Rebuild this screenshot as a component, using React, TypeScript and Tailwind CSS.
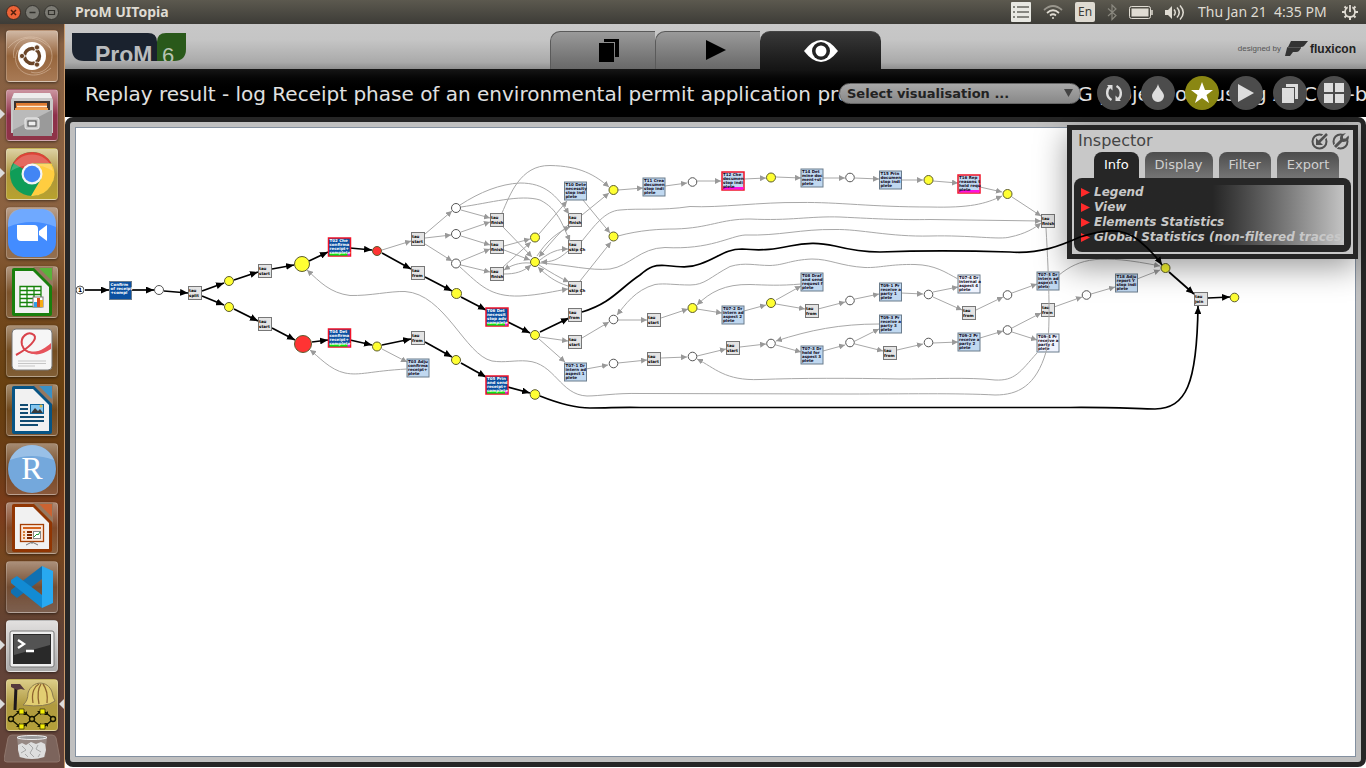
import React from "react";

type Straight = [number, number, number, number];

const strongEdges: Straight[] = [
  [85, 290, 109, 290], [132, 290, 154, 290], [164, 291, 188, 293], [202, 291, 224, 283],
  [202, 296, 224, 305], [234, 280, 258, 272], [234, 309, 258, 321], [272, 269, 294, 265],
  [272, 328, 295, 340], [309, 261, 328, 252], [312, 342, 328, 340], [350, 248, 372, 250],
  [350, 340, 372, 345], [382, 253, 411, 269], [382, 345, 411, 339], [425, 277, 452, 291],
  [425, 342, 452, 357], [461, 297, 486, 310], [461, 363, 486, 377], [508, 322, 530, 333],
  [508, 387, 530, 393], [540, 332, 569, 318], [1169, 272, 1194, 294], [1208, 298, 1230, 297],
];

const greyEdges: Straight[] = [
  [382, 250, 411, 241], [425, 234, 452, 211], [425, 238, 451, 235], [425, 244, 452, 261],
  [461, 210, 490, 218], [461, 232, 490, 222], [461, 236, 490, 245], [461, 261, 490, 249],
  [461, 265, 490, 272], [504, 246, 530, 239], [504, 250, 530, 260], [503, 227, 532, 257],
  [503, 267, 531, 242], [539, 234, 567, 201], [583, 200, 610, 233], [582, 215, 609, 193],
  [580, 281, 611, 242], [618, 190, 643, 188], [665, 186, 687, 183], [697, 181, 721, 181],
  [744, 179, 766, 178], [776, 177, 801, 178], [823, 178, 845, 178], [855, 178, 879, 179],
  [901, 180, 923, 180], [933, 181, 958, 183], [980, 187, 1002, 192], [1012, 197, 1041, 216],
  [540, 337, 568, 341], [539, 339, 565, 362], [582, 338, 609, 322], [618, 320, 647, 320],
  [661, 318, 688, 309], [697, 309, 722, 313], [744, 311, 766, 305], [776, 304, 805, 309],
  [776, 300, 801, 286], [818, 309, 845, 302], [855, 299, 879, 294], [901, 293, 923, 294],
  [933, 297, 962, 310], [933, 292, 958, 287], [976, 310, 1003, 297], [1012, 293, 1037, 284],
  [586, 369, 608, 365], [618, 363, 647, 360], [661, 358, 687, 357], [697, 356, 726, 349],
  [740, 347, 766, 344], [776, 345, 801, 352], [823, 351, 845, 345], [855, 341, 879, 329],
  [855, 344, 883, 351], [897, 350, 923, 344], [933, 343, 958, 342], [980, 338, 1003, 331],
  [1012, 328, 1041, 313], [1012, 332, 1037, 340], [1054, 307, 1082, 297], [1091, 294, 1115, 287],
  [1137, 279, 1160, 270], [382, 349, 407, 362],
];

const greyCurves: string[] = [
  "M460 205C480 192 500 184 520 183C545 183 556 195 569 214",
  "M461 207C490 203 520 194 540 200C558 209 562 224 570 241",
  "M502 213C510 195 520 165 550 165.5C580 166 595 175 609 187",
  "M460 267C480 285 490 297 520 296C540 295 555 291 568 289",
  "M1046 228C1049 280 1051 335 1046 352C1036 386 1018 395 995 395C960 393 900 394 850 394L640 393.5C615 393 600 396 587 396C560 395 555 363 527 361C515 360 505 363 492 361C465 355 445 294 405 291.5C390 291 370 296 350 295.5C330 293 320 282 307 270",
  "M407 369C370 371 360 376 345 373C330 370 318 356 310 350",
  "M1037 353C1020 372 1015 381 995 380C970 377 930 379 900 379C850 378 800 378 760 379.5C725 381 715 368 697 359",
  "M958 279C945 272 935 265 915 264.5C890 264 880 268 865 267.5C840 266 830 259 812 259C790 260 785 265 770 265.5C755 265.5 745 262 730 266.5C710 277 705 285 690 285C675 285 665 283 655 284.5C635 290 625 305 617 315",
  "M801 284C780 286 765 285 750 284.5C725 284 710 292 697 305",
  "M879 324C840 324 810 330 776 341",
  "M582 241C595 225 605 211 620 210C640 208 660 211 690 206.5C720 208 760 202 800 202.5C840 202 870 207 930 207C970 208 985 204 1002 196",
  "M618 236C640 230 660 229 675 229C710 228 720 219 750 219C790 221 810 216 840 217C880 219 900 220 930 219.5L1041 221",
  "M540 263C570 265 590 271 610 269C630 266 640 248 665 247.5C710 250 730 236 745 235C780 236 800 229 835 229.5C860 229 890 237 930 236C970 235 1000 240 1010 237C1025 234 1035 228 1041 223",
  "M1059 275C1080 258 1100 254 1160 266",
  "M504 274C515 274 523 272 531 265",
  "M530 263C519 262 510 266 504 270",
  "M568 225C556 236 548 246 539 257",
  "M537 256C546 242 557 232 570 227",
  "M540 260C550 252 558 249 568 249",
  "M568 251C558 260 552 262 541 262",
  "M539 265C550 272 560 278 569 282",
  "M568 286C555 282 546 275 538 267",
];

const returnFlow =
  "M540 396C560 404 575 408 590 408C610 408 620 407 640 407.5L1070 407.5C1110 407 1140 409 1155 409C1186 408 1197 385 1198 306";
const bypassFlow =
  "M582 312C612 303 620 288 640 275C650 266 655 265 665 265.5C680 267 690 268 700 264C718 258 725 249 742 249C765 251 775 249 790 246C808 242 820 243 835 246C855 251 865 252 880 252C930 250 980 251 1010 252C1040 254 1060 246 1080 237C1105 229 1122 228 1137 239C1147 247 1156 256 1162 265";

type Place = [number, number, number, string];
const Y = "#ffff33";
const R = "#ff3333";
const W = "#ffffff";
const places: Place[] = [
  [80, 290, 4, W], [159, 290, 4.5, W], [229, 281, 4.5, Y], [229, 307, 4.5, Y], [302, 264, 7.5, Y],
  [303, 344, 8.5, R], [377, 251, 4.5, R], [377, 346.5, 4.5, Y], [456, 208, 4.5, W], [456, 234, 4.5, W],
  [456, 263.5, 4.5, W], [456.5, 293.5, 5, Y], [456, 360, 4.5, Y], [535, 335, 4.5, Y], [535, 394.5, 4.8, Y],
  [535, 237.5, 4.5, Y], [535, 262, 4.5, Y], [613.5, 190, 4.5, Y], [613.5, 236.5, 4.5, Y], [613.5, 319.5, 4.3, W],
  [613.5, 363.5, 4.3, W], [692.5, 182, 4.3, W], [692.5, 308, 4.5, Y], [692.5, 356.5, 4.3, W], [771, 177.5, 4.5, Y],
  [771, 303, 4.5, Y], [771, 343.5, 4.3, W], [850, 177.5, 4.3, W], [850, 300.5, 4.3, W], [850, 342.5, 4.3, W],
  [928.5, 180, 4.5, Y], [928.5, 294.5, 4.3, W], [928.5, 342.5, 4.3, W], [1007.5, 194, 4.5, Y], [1007.5, 295, 4.3, W],
  [1007.5, 330, 4.3, W], [1086.5, 295, 4.3, W], [1165.5, 268, 4.5, Y], [1234.5, 297.5, 4.3, Y],
];

type Silent = [number, number, string];
const silents: Silent[] = [
  [195, 293, "split"], [265, 271, "start"], [265, 324, "start"], [418, 239, "start"], [418, 273, "from"],
  [418, 338, "from"], [497, 220, "finish"], [497, 247, "finish"], [497, 274, "finish"], [575, 220, "finish"],
  [575, 247, "skip Ch"], [575, 288, "skip Ch"], [575, 315, "from"], [575, 342, "start"], [654, 320, "start"],
  [654, 359, "start"], [733, 348, "start"], [812, 311, "from"], [890, 353, "from"], [969, 313, "from"],
  [1048, 310, "from"], [1048, 221, "finish"], [1201, 299, "join"],
];

type Activity = [number, number, "deep" | "light" | "pale", boolean, string[]];
const activities: Activity[] = [
  [120.5, 290.5, "deep", false, ["Confirm", "of receipt", "+compl"]],
  [339.5, 247, "deep", true, ["T02 Che", "confirma", "receipt+", "complete"]],
  [339.5, 338, "deep", true, ["T04 Det", "confirma", "receipt+", "complete"]],
  [497, 317, "deep", true, ["T06 Det", "necessit", "stop adv", "complete"]],
  [497, 385, "deep", true, ["T05 Prin", "and send", "receipt+", "complete"]],
  [418, 368, "light", false, ["T03 Adju", "confirma", "receipt+", "plete"]],
  [575.5, 191, "light", false, ["T10 Dete", "necessity", "stop indi", "plete"]],
  [654, 187, "light", false, ["T11 Crea", "documen", "stop indi", "plete"]],
  [575.5, 372, "light", false, ["T07-1 Dr", "intern ad", "aspect 1", "plete"]],
  [733, 181, "light", true, ["T12 Che", "documen", "stop indi", "plete"]],
  [812, 178, "light", false, ["T14 Det", "mine doc", "ment+st", "plete"]],
  [890.5, 180, "light", false, ["T15 Prin", "documen", "stop indi", "plete"]],
  [969, 184, "light", true, ["T16 Rep", "reasons t", "hold requ", "plete"]],
  [733, 315, "light", false, ["T07-2 Dr", "intern ad", "aspect 2", "plete"]],
  [812, 282, "light", false, ["T08 Draf", "and send", "request f", "plete"]],
  [890.5, 292, "light", false, ["T09-1 Pr", "receive a", "party 1", "plete"]],
  [812, 355, "light", false, ["T07-3 Dr", "hold for", "aspect 3", "plete"]],
  [890.5, 324, "light", false, ["T09-3 Pr", "receive a", "party 3", "plete"]],
  [969, 284, "pale", false, ["T07-4 Dr", "internal a", "aspect 4", "plete"]],
  [969, 342, "light", false, ["T09-2 Pr", "receive a", "party 2", "plete"]],
  [1048, 281, "light", false, ["T07-5 Dr", "intern ad", "aspect 5", "plete"]],
  [1048, 343, "pale", false, ["T09-4 Pr", "receive a", "party 4", "plete"]],
  [1126.5, 283, "light", false, ["T18 Adju", "report Y", "stop indi", "plete"]],
];

const fills = { deep: "#0a50a1", light: "#c0d8f0", pale: "#eef2fd" };

function ProcessGraph() {
  return (
    <svg className="block h-full w-full" role="img" aria-label="Petri net replay result">
      <defs>
        <marker id="ah-black" viewBox="0 0 7 6" refX="7" refY="3" markerWidth="8" markerHeight="7" markerUnits="userSpaceOnUse" orient="auto">
          <path d="M0 0L7 3L0 6z" fill="#000" />
        </marker>
        <marker id="ah-grey" viewBox="0 0 6 6" refX="6" refY="3" markerWidth="6" markerHeight="6" markerUnits="userSpaceOnUse" orient="auto">
          <path d="M0 0L6 3L0 6z" fill="#999" />
        </marker>
      </defs>
      <g transform="translate(-76 -128)" fontFamily="'DejaVu Sans', sans-serif" fontWeight="bold">
        <g fill="none" stroke="#a8a8a8" strokeWidth="1">
          {greyEdges.map(([a, b, c, d], i) => (
            <path key={i} d={`M${a} ${b}L${c} ${d}`} markerEnd="url(#ah-grey)" />
          ))}
        </g>
        <g fill="none" stroke="#000" strokeWidth="1.7">
          {strongEdges.map(([a, b, c, d], i) => (
            <path key={i} d={`M${a} ${b}L${c} ${d}`} markerEnd="url(#ah-black)" />
          ))}
          <path d={returnFlow} markerEnd="url(#ah-black)" />
        </g>
        {silents.map(([x, y, label], i) => (
          <g key={i}>
            <rect x={x - 6.5} y={y - 6.5} width="13" height="13" fill="#e4e4e4" stroke="#777" />
            <text x={x - 6} y={y - 1} fontSize="4" fill="#000">tau</text>
            <text x={x - 6} y={y + 4} fontSize="4" fill="#000">{label}</text>
          </g>
        ))}
        {activities.map(([x, y, tone, deviating, lines], i) => (
          <g key={i}>
            <rect x={x - 11} y={y - 9} width="22" height="18" fill={fills[tone]} stroke={deviating ? "#f0142a" : "#6b7c8c"} strokeWidth={deviating ? 1.5 : 1} />
            {deviating && (
              <>
                <rect x={x - 10} y={y + 6} width="20" height="2.5" fill={tone === "deep" ? "#12e612" : "#ff10e0"} />
                <rect x={x + 8} y={y + 6} width="2.5" height="2.5" fill="#ff10e0" />
              </>
            )}
            {lines.map((line, n) => (
              <text key={n} x={x - 10} y={y - 5 + n * 4} fontSize="4" fill={tone === "deep" ? "#fff" : "#100820"}>
                {line}
              </text>
            ))}
          </g>
        ))}
        <g fill="none" stroke="#a8a8a8" strokeWidth="1">
          {greyCurves.map((d, i) => (
            <path key={i} d={d} markerEnd="url(#ah-grey)" />
          ))}
        </g>
        {places.map(([x, y, r, fill], i) => (
          <circle key={i} cx={x} cy={y} r={r} fill={fill} stroke={fill === W ? "#555" : "#5c5c30"} strokeWidth="1" />
        ))}
        <text x="78" y="292" fontSize="6" fill="#000">1</text>
      </g>
    </svg>
  );
}

function AppTile({ label, tone, running, active, children }: { label: string; tone: string; running?: boolean; active?: boolean; children: React.ReactNode }) {
  return (
    <div className="relative flex w-full justify-center">
      {running && <span className="absolute top-5 left-0 border-y-[5px] border-l-[5px] border-y-transparent border-l-[#dcdcdc]" />}
      <button aria-label={label} className={`h-13 w-13 overflow-hidden rounded border border-white/20 shadow-[0_1px_3px_rgba(0,0,0,0.5)] ${tone}`}>
        <svg viewBox="1 1 50 50" className="block h-full w-full">{children}</svg>
      </button>
      {active && <span className="absolute top-5 right-0 border-y-[5px] border-r-[5px] border-y-transparent border-r-[#dcdcdc]" />}
    </div>
  );
}

function DocumentShape({ dark, light, children }: { dark: string; light: string; children: React.ReactNode }) {
  return (
    <>
      <path d="M8 2h24l14 14v32a2 2 0 0 1-2 2H8a2 2 0 0 1-2-2V4a2 2 0 0 1 2-2z" fill={dark} />
      <path d="M9 5h18l16 16v26H9z" fill="#f1f1f1" />
      <path d="M27 1h20v20z" fill="#96785f" />
      <path d="M33 2h13v13z" fill={light} />
      {children}
    </>
  );
}

const clearTile = "bg-linear-to-b from-white/40 via-white/5 to-white/15";

function Launcher() {
  return (
    <nav aria-label="Launcher" className="flex w-[65px] shrink-0 flex-col gap-[7px] overflow-hidden border-r border-[#c99a6c] bg-[linear-gradient(#5d4532_0px,#866043_20px,#8c6240_200px,#754a20_270px,#68400f_370px,#6b3d16_440px,#7d3c1c_490px,#75461f_530px,#604236_610px,#64443a_700px)] pt-1.5">
      <AppTile label="Dash home" tone="bg-linear-to-b from-[#d0b8a4] via-[#96653c] to-[#a87a55]">
        <g fill="none" stroke="#e5ccb5" strokeWidth="1" opacity=".5">
          <path d="M2 18C15 2 40 4 45 20S35 46 25 42M8 28C4 12 24-2 44 18M12 20C2 38 25 55 45 38" />
        </g>
        <circle cx="26" cy="26" r="14" fill="#fff" />
        <circle cx="26" cy="26" r="7.5" fill="none" stroke="#6a4528" strokeWidth="3.4" />
        <g stroke="#fff" strokeWidth="1.2"><path d="M26 26h-12M26 26l6-11M26 26l6 11" /></g>
        <circle cx="26" cy="26" r="5.3" fill="#fff" />
        <g fill="#6a4528" stroke="#fff" strokeWidth=".8"><circle cx="16" cy="26" r="2.6" /><circle cx="31" cy="17.4" r="2.6" /><circle cx="31" cy="34.6" r="2.6" /></g>
      </AppTile>
      <AppTile label="Files" running tone="bg-linear-to-b from-[#cb95a1] via-[#8e304a] to-[#8e3447]">
        <path d="M8 4h36l3 7v33H5V11z" fill="#c8c8c8" />
        <path d="M8 4h36l2 5H6z" fill="#ededed" />
        <path d="M8 12h36v12H8z" fill="#3b322e" />
        <path d="M10 14h31v10H10z" fill="#e07b30" />
        <path d="M11 17.500h30" stroke="#fff0d8" strokeWidth="1.6" />
        <path d="M9 19h33v3H9z" fill="#f3a14e" />
        <path d="M7 21h39v26H7z" fill="#9a9a9a" />
        <path d="M7 21h39L7 41z" fill="#bababa" />
        <rect x="19" y="29" width="14" height="11" rx="2" fill="#c9c9c9" stroke="#eee" />
        <rect x="22" y="32" width="8" height="5" fill="#eee" stroke="#444" />
      </AppTile>
      <AppTile label="Google Chrome" running tone="bg-linear-to-b from-[#ddd2a4] via-[#ae943a] to-[#b8a22e]">
        <circle cx="26" cy="26" r="22" fill="#0f9d58" />
        <path d="M26 26L7 15A22 22 0 0 1 45.5 15.5H26z" fill="#dc4437" />
        <path d="M26 15.5h19.6A22 22 0 0 1 25 48l10-17z" fill="#ffcd40" />
        <circle cx="26" cy="26" r="10.5" fill="#f4f4f4" />
        <circle cx="26" cy="26" r="8.3" fill="#4285f4" />
        <path d="M5 23C10 1 42 1 47 23C35 15 17 15 5 23z" fill="#fff" opacity=".2" />
      </AppTile>
      <AppTile label="Zoom" tone={clearTile}>
        <rect x="2" y="2" width="48" height="48" rx="15" fill="#438cff" />
        <path d="M2 20V17Q2 2 17 2h18q15 0 15 15v3Q26 10 2 20z" fill="#8dbcff" opacity=".6" />
        <path d="M11 18h17a4 4 0 0 1 4 4v12H15a4 4 0 0 1-4-4zM33 24l8-6v16l-8-6z" fill="#fff" />
      </AppTile>
      <AppTile label="LibreOffice Calc" tone={clearTile}>
        <DocumentShape dark="#197f0d" light="#59b23a">
          <path d="M14 20.500h21v20H14zM14 24.500h21M14 28.500h21M14 32.500h21M14 36.500h21M21 20v20M28 20v20" fill="#fff" stroke="#16820a" strokeWidth="1.3" />
          <rect x="27" y="31" width="10" height="10" fill="#fff" stroke="#777" />
          <path d="M28 36h3v5h-3z" fill="#309fe7" /><path d="M31 32h3v9h-3z" fill="#d94c18" /><path d="M34 34h3v7h-3z" fill="#f3ac15" />
        </DocumentShape>
      </AppTile>
      <AppTile label="Document viewer" tone={clearTile}>
        <rect x="6" y="4" width="40" height="41" rx="4" fill="#f6f6f6" stroke="#777" />
        <path d="M10 30C23 23 32 14 28 10C22 5 14 12 16 20C19 29 30 31 44 22" fill="none" stroke="#d9434b" strokeWidth="2" />
        <path d="M20 25C30 30 38 24 45 18v6C35 31 26 31 20 25z" fill="#e6535b" />
        <path d="M12 36h28M12 38.500h28M12 41h17" stroke="#c6c6c6" strokeWidth="1" />
      </AppTile>
      <AppTile label="LibreOffice Writer" tone={clearTile}>
        <DocumentShape dark="#075484" light="#3a91c5">
          <path d="M14 21h8M14 25h8M14 29h8M14 33h24M14 37h24M14 41h18" stroke="#124c72" strokeWidth="2" />
          <rect x="24.500" y="20.500" width="13" height="9" fill="#84c6ef" stroke="#11659b" />
          <path d="M25 29l4-5 3 3 2-2 3 4z" fill="#393939" /><circle cx="35" cy="22" r="1.500" fill="#ddbc4e" />
        </DocumentShape>
      </AppTile>
      <AppTile label="R" tone={clearTile}>
        <circle cx="26" cy="26" r="24" fill="#74a8dc" />
        <path d="M4 17C12-3 40-3 48 17Q26 9 4 17z" fill="#c8def5" opacity=".45" />
        <text x="26" y="36" textAnchor="middle" fontFamily="'Liberation Serif', serif" fontSize="32" fill="#fff">R</text>
      </AppTile>
      <AppTile label="LibreOffice Impress" tone={clearTile}>
        <DocumentShape dark="#913603" light="#cb6332">
          <rect x="14.500" y="22.500" width="23" height="17" fill="#f9e7da" stroke="#a53e03" strokeWidth="1.300" />
          <path d="M17 26h18" stroke="#d4621d" strokeWidth="2" />
          <path d="M17 30h2M17 33h2M17 36h2" stroke="#d4803a" strokeWidth="2" /><path d="M21 30h5M21 33h5M21 36h5" stroke="#7c2800" strokeWidth="2" />
          <rect x="27.500" y="29.500" width="7" height="7" fill="#fff" stroke="#888" /><path d="M28 35l3-3 1 1 2-3" stroke="#1c9938" fill="none" />
          <path d="M26 40l-6 3M26 40l6 3M26 40v2" stroke="#777" />
        </DocumentShape>
      </AppTile>
      <AppTile label="Visual Studio Code" tone={clearTile}>
        <path d="M36 5v13L11 37l-6-5v-3z" fill="#1071b2" />
        <path d="M36 47V34L11 15l-6 4v3z" fill="#128bd4" />
        <path d="M36 5l11 5v32l-11 5z" fill="#28a9f1" />
      </AppTile>
      <AppTile label="Terminal" running tone="bg-linear-to-b from-[#e2e0df] to-[#aaa]">
        <rect x="4" y="11" width="44" height="36" rx="2" fill="#eee" stroke="#777" />
        <path d="M7 14h38v30H7z" fill="#292929" /><path d="M8 15h36v10L8 35z" fill="#535353" />
        <path d="M12 20l6 4-6 4M20 31h8" stroke="#fff" strokeWidth="2.300" fill="none" />
      </AppTile>
      <AppTile label="ProM" running active tone="bg-linear-to-b from-[#dccd88] via-[#b09a40] to-[#b4a039]">
        <path d="M10 7L9 31" stroke="#1d171c" strokeWidth="3" /><path d="M5 5h9l5 6-4-1-4 1-6-3z" fill="#55393d" />
        <path d="M17 26Q22 22 22 14C26 1 42 1 46 13Q47 19 49 22Q40 29 17 26z" fill="#e2ce72" stroke="#8a7a50" /><path d="M27 24C25 13 29 7 33 5M33 25C31 15 33 8 35 5M41 24C42 15 40 9 37 5" stroke="#8e642f" strokeWidth="1.300" fill="none" />
        <g stroke="#151500" fill="none" strokeWidth="1.400"><circle cx="5" cy="40" r="2.500" /><circle cx="26" cy="40" r="2.500" /><circle cx="47" cy="40" r="2.500" /><path d="M7 38l6-5M13 47l-6-5M24 38l-6-5M24 42l-6 5M28 38l6-5M28 42l6 5M45 38l-6-5M45 42l-6 5" /></g>
        <path d="M10 32h4v4zM10 48h4v-4zM21 32v4h-4zM21 48v-4h-4zM31 32h4v4zM31 48h4v-4zM42 32v4h-4zM42 48v-4h-4z" fill="#151500" />
        <path d="M13 30h5v5h-5zM13 45h5v5h-5zM34 30h5v5h-5zM34 45h5v5h-5z" fill="#f3ed05" stroke="#292700" strokeWidth=".7" />
      </AppTile>
      <button aria-label="Trash" className="-mt-1 flex justify-center">
        <svg width="56" height="29" viewBox="0 0 56 29">
          <path d="M8 1h40q3 0 4 3l4 21q0 3-3 3H3q-3 0-3-3L4 4Q5 1 8 1z" fill="#aaa09d" opacity=".35" stroke="#ded2c8" />
          <path d="M13 3h30l-2 20q-13 4-26 0z" fill="#b2aeac" opacity=".5" />
          <path d="M14 11l4-2 4 2 5-3 5 2 5-2 4 2 1 6-2 7q-12 4-24 0l-2-7z" fill="#dedede" />
          <path d="M18 12l4 4-5 3M25 10l4 4-3 5 4 4M34 11l-2 4 5 3M21 20l3 3M36 20l-2 3" stroke="#a8a8a8" fill="none" />
          <ellipse cx="28" cy="3.500" rx="15" ry="2" fill="#999" stroke="#eee" />
        </svg>
      </button>
    </nav>
  );
}

function SystemBar() {
  return (
    <header className="flex h-6 shrink-0 items-center justify-between bg-linear-to-b from-[#5c594f] to-[#3d3c37] pr-[7px] pl-1.5 font-['Noto_Sans',sans-serif] text-[#dfdbd2]">
      <div className="flex items-center gap-1">
        <button aria-label="Close" className="h-[15px] w-[15px] rounded-full border border-[#3a2a22] bg-[#ec6337]"><svg viewBox="0 0 13 13"><path d="M4 4l5 5M9 4L4 9" stroke="#50200e" strokeWidth="1.500" /></svg></button>
        <button aria-label="Minimize" className="h-[15px] w-[15px] rounded-full border border-[#35342f] bg-[#7c7b74]"><svg viewBox="0 0 13 13"><path d="M3.500 6.500h6" stroke="#32312c" strokeWidth="1.500" /></svg></button>
        <button aria-label="Maximize" className="h-[15px] w-[15px] rounded-full border border-[#35342f] bg-[#7c7b74]"><svg viewBox="0 0 13 13"><path d="M3.500 4.500h6v4h-6z" fill="none" stroke="#32312c" strokeWidth="1.200" /></svg></button>
        <h1 className="ml-3 text-sm font-bold">ProM UITopia</h1>
      </div>
      <div className="flex items-center gap-3 text-sm">
        <svg aria-label="List" width="20" height="20" viewBox="0 0 20 20"><rect width="20" height="20" rx="1" fill="#e8e8e2" /><path d="M2 5h2M6 5h12M2 10h2M6 10h12M2 15h2M6 15h12" stroke="#66665f" strokeWidth="1.500" /></svg>
        <svg aria-label="Wi-Fi" width="20" height="16" viewBox="0 0 20 16" fill="none" stroke="#dfdbd2" strokeWidth="1.700"><path d="M1 6Q10-2 19 6" opacity=".5" /><path d="M4 9q6-5.500 12 0M7 11.500q3-2.500 6 0" /><circle cx="10" cy="14" r="1" fill="#dfdbd2" stroke="none" /></svg>
        <span className="flex h-5 w-5 items-center justify-center rounded-xs bg-[#dfdbd2] text-xs text-[#3d3c37]">En</span>
        <svg aria-label="Bluetooth" width="10" height="17" viewBox="0 0 10 17"><path d="M1 4.500l8 7-4 4V1l4 4-8 7" fill="none" stroke="#8a887f" strokeWidth="1.200" /></svg>
        <svg aria-label="Battery" width="24" height="13" viewBox="0 0 24 13"><rect x=".5" y=".5" width="21" height="12" rx="2" fill="none" stroke="#dfdbd2" /><rect x="2.500" y="2.500" width="17" height="8" fill="#dfdbd2" /><path d="M23 4v5" stroke="#dfdbd2" strokeWidth="1.500" /></svg>
        <svg aria-label="Volume" width="21" height="17" viewBox="0 0 21 17"><path d="M0 6h3l4-4v13l-4-4H0z" fill="#dfdbd2" /><path d="M9 5.500q2.500 3 0 6M12 3.500q4.500 5 0 10M15 1.500q6.500 7 0 14" fill="none" stroke="#dfdbd2" strokeWidth="1.500" /></svg>
        <time className="w-[131px] whitespace-nowrap">Thu Jan 21&nbsp; 4:35 PM</time>
        <svg aria-label="Session" width="18" height="18" viewBox="0 0 18 18" fill="none" stroke="#dfdbd2"><circle cx="9" cy="9" r="5" strokeWidth="1.800" /><path d="M9 14v3M4 9H1M14 9h3M5.500 5.500l-2-2M12.500 5.500l2-2M5.500 12.500l-2 2M12.500 12.500l2 2" strokeWidth="2" /><path d="M9 1v8" stroke="#4c4a43" strokeWidth="4.500" /><path d="M9 2v7" strokeWidth="1.800" /></svg>
      </div>
    </header>
  );
}

const toolButton = "flex h-[34px] w-[34px] items-center justify-center rounded-full";

function TitleBar() {
  return (
    <div className="relative flex h-12 shrink-0 items-center overflow-hidden bg-linear-to-b from-[#161616] via-black to-black">
      <h2 className="pt-0.5 pl-5 font-['DejaVu_Sans',sans-serif] text-xl whitespace-nowrap text-[#e0e0e0]">
        Replay result - log Receipt phase of an environmental permit application process ( WABO ), CoSeLoG project on&nbsp; using A* Cost-based Fitness Express with ILP
      </h2>
      <div className="absolute inset-y-0 right-[15px] flex items-center gap-2.5">
        <label className="relative mr-1.5 block">
          <span className="sr-only">Visualisation</span>
          <select className="block h-[21px] w-[242px] appearance-none rounded-full border border-[#666] bg-linear-to-b from-[#a8a8a8] to-[#888] pl-[7px] font-['DejaVu_Sans',sans-serif] text-[13px] font-bold text-[#222]">
            <option>Select visualisation ...</option>
          </select>
          <svg className="pointer-events-none absolute top-1.5 right-2" width="9" height="8" viewBox="0 0 9 8"><path d="M0 0h9L4.500 8z" fill="#444" /></svg>
        </label>
        <button aria-label="Refresh" className={`${toolButton} bg-[#4c4c4c]`}><svg width="18" height="20" viewBox="0 0 18 20" fill="none" stroke="#ddd" strokeWidth="2.400"><path d="M6.500 17C1 14 1 7 5 3.500M11.500 3C17 6 17 13 13 16.500" /><path d="M2 2h5.500v5.500zM16 18h-5.500v-5.500z" fill="#ddd" stroke="none" /></svg></button>
        <button aria-label="Drop" className={`${toolButton} bg-[#4c4c4c]`}><svg width="14" height="18" viewBox="0 0 14 18"><path d="M7 0C8 5 13 8 13 12a6 6 0 0 1-12 0C1 8 6 5 7 0z" fill="#ddd" /></svg></button>
        <button aria-label="Favourite" className={`${toolButton} bg-[#8a8713]`}><svg width="22" height="22" viewBox="0 0 22 22"><path d="M11 0l3 8h8l-6.500 5L18 21l-7-5-7 5 2.500-8L0 8h8z" fill="#fff" /></svg></button>
        <button aria-label="Run" className={`${toolButton} bg-[#4c4c4c]`}><svg width="16" height="18" viewBox="0 0 16 18"><path d="M0 0l16 9-16 9z" fill="#ddd" /></svg></button>
        <button aria-label="Duplicate" className={`${toolButton} bg-[#4c4c4c]`}><svg width="16" height="19" viewBox="0 0 16 19"><path d="M4 0h12v15h-3V3H4zM0 4h12v15H0z" fill="#ddd" /></svg></button>
        <button aria-label="Grid" className={`${toolButton} bg-[#4c4c4c]`}><svg width="20" height="20" viewBox="0 0 20 20"><path d="M0 0h9v9H0zM11 0h9v9h-9zM0 11h9v9H0zM11 11h9v9h-9z" fill="#ddd" /></svg></button>
      </div>
    </div>
  );
}

function MainHeader() {
  return (
    <div className="grid h-[45px] shrink-0 grid-cols-[1fr_auto_1fr] bg-[linear-gradient(#c8c8c8_0%,#c5c5c5_35%,#aaa_85%,#8e8e8e_100%)]">
      <svg className="mt-[9px] ml-[7px]" width="114" height="28" viewBox="0 0 114 28" role="img" aria-label="ProM 6">
        <path d="M0 0h76q9 0 9 9v19H12Q0 28 0 16z" fill="#1a222e" />
        <path d="M85 28V9q0-9 9-9h20v16q0 12-12 12z" fill="#29591a" />
        <text x="23" y="30" fontFamily="'Liberation Sans', sans-serif" fontSize="23" fontWeight="bold" fill="#b9bcbe">ProM</text>
        <text x="90" y="30" fontFamily="'Liberation Sans', sans-serif" fontSize="22" fill="#b8c4b2">6</text>
      </svg>
      <div role="tablist" className="mt-[7px] flex">
        <button role="tab" aria-label="Workspace" className="flex w-[105px] justify-center rounded-tl-[10px] border-t border-l border-[#5a5a5a] bg-linear-to-b from-[#9a9a9a] to-[#686868] pt-[7px] pl-3">
          <svg width="20" height="23" viewBox="0 0 20 23"><path d="M5 0h15v18h-4V3H5zM0 4h15v19H0z" fill="#000" /></svg>
        </button>
        <button role="tab" aria-label="Actions" className="flex w-[105px] justify-center rounded-tl-[10px] border-t border-l border-[#5a5a5a] bg-linear-to-b from-[#9a9a9a] to-[#686868] pt-2 pl-4">
          <svg width="20" height="20" viewBox="0 0 20 20"><path d="M0 0l20 10L0 20z" fill="#000" /></svg>
        </button>
        <button role="tab" aria-selected="true" aria-label="Views" className="flex w-[121px] justify-center rounded-t-[10px] border-t border-[#444] bg-linear-to-b from-[#393939] to-[#151515] pt-2">
          <svg width="34" height="22" viewBox="0 0 34 22"><path d="M0 11Q17-11 34 11Q17 33 0 11z" fill="#fff" /><circle cx="17" cy="11" r="9" fill="#232323" /><circle cx="17" cy="11" r="5.500" fill="#fff" /></svg>
        </button>
      </div>
      <div className="flex items-center justify-self-end pt-1 pr-2.5 font-['Liberation_Sans',sans-serif]">
        <span className="text-[8px] text-[#555]">designed by</span>
        <svg className="ml-1" width="23" height="15" viewBox="0 0 23 15"><path d="M6 0h17l-4 5q-1 1-3 1H3zM2 7h14l-2 3q-1 1-3 1H8l-3 4H0z" fill="#333" /><path d="M2 6.500h14" stroke="#555" /></svg>
        <span className="ml-0.5 text-xs font-bold text-[#222]">fluxicon</span>
      </div>
    </div>
  );
}

function InspectorTab({ name, active }: { name: string; active?: boolean }) {
  return (
    <button role="tab" aria-selected={!!active} className={`h-[26px] rounded-t-lg px-2.5 text-[13px] ${active ? "bg-[#262626] text-white" : "bg-linear-to-b from-[#4d4d4d] to-[#757575] text-[#d0d0d0]"}`}>
      {name}
    </button>
  );
}

function Inspector() {
  return (
    <aside className="absolute top-[-3px] right-[-3px] z-10 w-[291px] border-[5px] border-[#262626] bg-[#c8c8c8] px-0.5 pb-0.5 font-['DejaVu_Sans',sans-serif] shadow-[0_8px_30px_rgba(0,0,0,0.4)]">
      <div className="flex h-[22px] items-center justify-between pr-0.5 pl-1">
        <h3 className="text-base text-[#444]">Inspector</h3>
        <div className="flex gap-1">
          <button aria-label="Collapse"><svg width="17" height="17" viewBox="0 0 17 17"><circle cx="8.500" cy="8.500" r="7" fill="none" stroke="#505050" strokeWidth="2" /><path d="M17 0L7 10" stroke="#c8c8c8" strokeWidth="5" /><path d="M16 1l-8 8" stroke="#505050" strokeWidth="2.500" /><path d="M5 5v7h7z" fill="#505050" /></svg></button>
          <button aria-label="Settings"><svg width="17" height="17" viewBox="0 0 17 17"><circle cx="8.500" cy="8.500" r="7" fill="none" stroke="#505050" strokeWidth="2" /><path d="M17 0L1 16" stroke="#c8c8c8" strokeWidth="5" /><path d="M3 14l8-8" stroke="#505050" strokeWidth="3" /><path d="M14 0l-3 3v2.500h2.500L16.500 2.500Q18 7 14 8.500Q9 10 8 6Q7.500 1 14 0z" fill="#505050" /></svg></button>
        </div>
      </div>
      <div role="tablist" className="flex gap-1.5 pl-5">
        <InspectorTab name="Info" active />
        <InspectorTab name="Display" />
        <InspectorTab name="Filter" />
        <InspectorTab name="Export" />
      </div>
      <div className="rounded-lg bg-[#262626] p-[7px]">
        <div className="overflow-hidden bg-linear-to-r from-[#262626] from-50% to-[#c4c4c4]">
          {["Legend", "View", "Elements Statistics", "Global Statistics (non-filtered traces)"].map((title) => (
            <button key={title} className="flex h-[15px] w-full items-center gap-1 text-xs leading-[15px] font-bold whitespace-nowrap text-[#c8c8c8] italic">
              <svg className="shrink-0" width="9" height="9" viewBox="0 0 9 9"><path d="M0 0l9 4.500L0 9z" fill="#ff2a2a" /></svg>
              {title}
            </button>
          ))}
        </div>
      </div>
    </aside>
  );
}

export default function App() {
  return (
    <div className="flex h-screen flex-col overflow-hidden">
      <SystemBar />
      <div className="flex min-h-0 flex-1">
        <Launcher />
        <main className="flex min-w-0 flex-1 flex-col bg-white pb-px">
          <MainHeader />
          <TitleBar />
          <div className="min-h-0 flex-1 rounded-lg border-[5px] border-[#262626] bg-[#c0c0c0] p-[5px]">
            <div className="relative h-full border border-[#8390a0] bg-white">
              <div className="h-full overflow-hidden">
                <ProcessGraph />
              </div>
              <Inspector />
              <svg className="pointer-events-none absolute inset-0 z-20 h-full w-full" aria-hidden="true">
                <path d={bypassFlow} transform="translate(-76 -128)" fill="none" stroke="#000" strokeWidth="1.700" markerEnd="url(#ah-black)" />
              </svg>
            </div>
          </div>
        </main>
      </div>
    </div>
  );
}
